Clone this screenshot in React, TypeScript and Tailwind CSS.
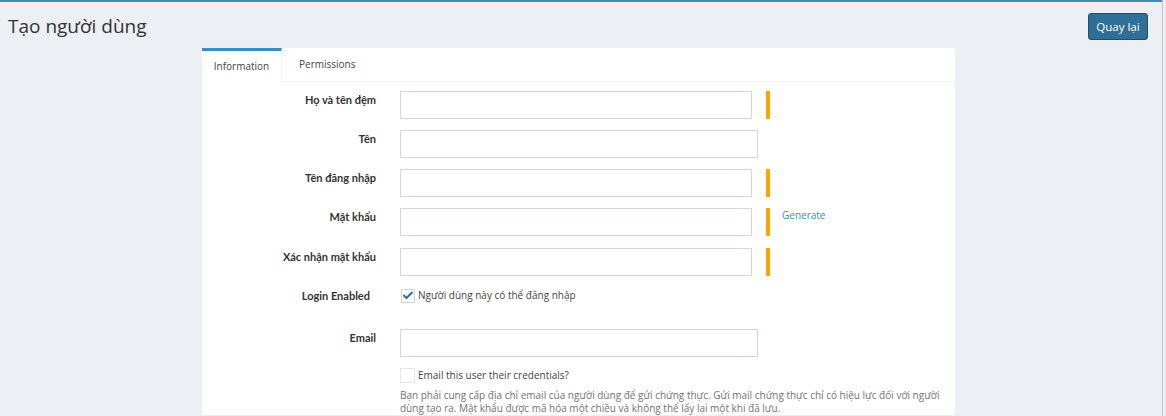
import { Check } from "lucide-react";

const font = { fontFamily: '"Open Sans", "Noto Sans", sans-serif' };
const labelFont = { fontFamily: 'Lato, "Open Sans", sans-serif' };

function Bar() {
  return <span className="ml-[14px] h-[28px] w-[4px] shrink-0 bg-[#ffa500]" />;
}

function Label({ children, pad }: { children: React.ReactNode; pad?: boolean }) {
  return (
    <label
      className={`w-[174px] shrink-0 text-right text-[11px] font-bold leading-[15px] text-[#333] ${
        pad ? "pr-[6px]" : "pt-px"
      }`}
      style={labelFont}
    >
      {children}
    </label>
  );
}

function Row({
  label,
  wide,
  bar,
  extra,
}: {
  label: string;
  wide?: boolean;
  bar?: boolean;
  extra?: React.ReactNode;
}) {
  return (
    <div className="mb-[11px] flex items-start">
      <Label>{label}</Label>
      <div className="ml-[24px] flex items-start">
        <input
          className={`h-[28px] border border-[#d2d6de] bg-white px-2 text-[11px] outline-none ${
            wide ? "w-[358px]" : "w-[352px]"
          }`}
        />
        {bar && <Bar />}
        {extra}
      </div>
    </div>
  );
}

export default function App() {
  return (
    <div className="flex h-[416px] overflow-hidden bg-[#ecf0f5]" style={font}>
      <div className="flex-1 border-t-2 border-[#3c8dbc]">
        <div className="flex items-start justify-between pl-[8px] pr-[14px] pt-[11px]">
          <h1 className="text-[19px] leading-[26px] text-[#333]">Tạo người dùng</h1>
          <button className="h-[27px] w-[60px] rounded-[3px] border border-[#204d74] bg-[#2f6f96] text-[11.5px] text-white">
            Quay lại
          </button>
        </div>

        <div className="ml-[202px] mt-[8px] w-[753px] rounded-t-[3px] bg-white">
          <div className="flex h-[34px] border-b border-[#f4f4f4]">
            <div className="-mb-px flex w-[80px] items-center justify-center border-r border-t-[3px] border-r-[#f4f4f4] border-t-[#3c8dbc] bg-white text-[10px] text-[#444]">
              Information
            </div>
            <div className="flex items-center pl-[17px] text-[10px] text-[#444]">Permissions</div>
          </div>

          <div className="pt-[9px]">
            <Row label="Họ và tên đệm" bar />
            <Row label="Tên" wide />
            <Row label="Tên đăng nhập" bar />
            <Row
              label="Mật khẩu"
              bar
              extra={
                <a className="ml-[12px] text-[10px] leading-[15px] text-[#3c8dbc]" href="#">
                  Generate
                </a>
              }
            />
            <div className="pt-px">
              <Row label="Xác nhận mật khẩu" bar />
            </div>

            <div className="mt-[12px] flex items-center">
              <Label pad>Login Enabled</Label>
              <div className="ml-[25px] flex items-center">
                <span className="flex h-[14px] w-[14px] items-center justify-center border border-[#d6d6d6] bg-white">
                  <Check className="h-[13px] w-[13px] text-[#2a6fb0]" strokeWidth={4} />
                </span>
                <span className="ml-[3px] text-[10px] leading-[15px] text-[#444]">
                  Người dùng này có thể đăng nhập
                </span>
              </div>
            </div>

            <div className="mt-[26px]">
              <Row label="Email" wide />
            </div>

            <div className="mt-[2px] ml-[198px]">
              <div className="flex items-center">
                <span className="h-[15px] w-[15px] border border-[#e6e6e6] bg-white" />
                <span className="ml-[3px] text-[10px] leading-[15px] text-[#444]">
                  Email this user their credentials?
                </span>
              </div>
              <p className="mt-[6px] w-[545px] text-[10px] leading-[13px] text-[#737373]">
                Bạn phải cung cấp địa chỉ email của người dùng để gửi chứng thực. Gửi mail chứng thực chỉ có hiệu
                lực đối với người dùng tạo ra. Mật khẩu được mã hóa một chiều và không thể lấy lại một khi đã lưu.
              </p>
            </div>
          </div>
        </div>
      </div>
      <div className="w-[4px] shrink-0 border-l border-[#c6c6c6] bg-[#eceef1]" />
    </div>
  );
}
